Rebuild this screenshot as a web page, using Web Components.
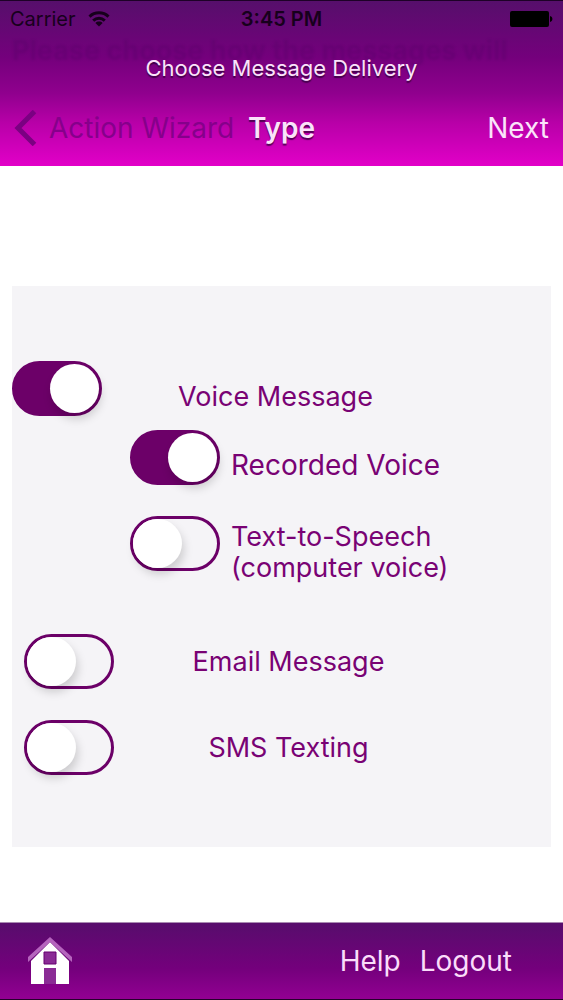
<!DOCTYPE html>
<html lang="en">
<head>
<meta charset="utf-8">
<meta name="viewport" content="width=device-width, initial-scale=1">
<title>Choose Message Delivery Type</title>
<style>
  body {
    margin: 0;
    font-family: Inter, "Liberation Sans", sans-serif;
    background: #fff;
  }
</style>
</head>
<body>
<delivery-screen>
  <span slot="under">Please choose how the messages will</span>
  <status-bar slot="top" carrier="Carrier" time="3:45 PM"></status-bar>
  <nav-header slot="top">
    <span slot="prompt">Choose Message Delivery</span>
    <span slot="back">Action Wizard</span>
    <span slot="title">Type</span>
    <span slot="action">Next</span>
  </nav-header>

  <option-panel>
    <toggle-row checked>Voice Message</toggle-row>
    <toggle-row level="sub" size="large" checked>Recorded Voice</toggle-row>
    <toggle-row level="sub" gap="wide">Text-to-Speech<br>(computer voice)</toggle-row>
    <toggle-row level="inset" gap="section">Email Message</toggle-row>
    <toggle-row level="inset" gap="wide">SMS Texting</toggle-row>
  </option-panel>

  <tool-bar slot="bottom">
    <a href="#help">Help</a>
    <a href="#logout">Logout</a>
  </tool-bar>
</delivery-screen>

<script>
class DeliveryScreen extends HTMLElement {
  constructor() {
    super();

    const shadowRoot = this.attachShadow({ mode: 'open' });
    shadowRoot.innerHTML = `
      <style>
        :host {
          display: flex;
          flex-direction: column;
          min-height: 100vh;
        }

        header {
          position: relative;
          box-sizing: border-box;
          border-top: 1px solid #1d0127;
          background: linear-gradient(#560f6b, #74007c 34%, #90008e 56%, #b800a8 74%, #e200c8);
        }

        /* page text scrolled under the translucent header */
        .under {
          position: absolute;
          top: 34px;
          left: 12px;
          right: 0;
          overflow: hidden;
          white-space: nowrap;
          font-size: 27px;
          line-height: 32px;
          font-weight: 700;
          color: rgba(80, 0, 100, .25);
          filter: blur(1px);
        }

        ::slotted(status-bar),
        ::slotted(nav-header) {
          position: relative;
        }

        main {
          flex: 1;
          padding: 120px 12px 75px;
          display: flex;
        }
      </style>
      <header>
        <div class="under"><slot name="under"></slot></div>
        <slot name="top"></slot>
      </header>
      <main><slot></slot></main>
      <slot name="bottom"></slot>
    `;
  }
}

class StatusBar extends HTMLElement {
  constructor() {
    super();

    const shadowRoot = this.attachShadow({ mode: 'open' });
    shadowRoot.innerHTML = `
      <style>
        :host {
          display: grid;
          grid-template-columns: 1fr auto 1fr;
          align-items: center;
          height: 36px;
          padding: 0 10px;
          font-size: 20px;
          color: #17001c;
        }

        .carrier {
          display: flex;
          align-items: center;
          gap: 12px;
        }

        .time {
          font-weight: 600;
        }

        .battery {
          justify-self: end;
        }

        svg {
          display: block;
        }
      </style>
      <div class="carrier">
        <span>${this.getAttribute('carrier')}</span>
        <svg width="22" height="16" viewBox="0 0 22 16" fill="none" stroke="currentColor" stroke-width="3">
          <path d="M1.5 5.6C6.8 .6 15.2 .6 20.5 5.6"/>
          <path d="M5.2 9.6C8.6 6.4 13.4 6.4 16.8 9.6"/>
          <path d="M11 15.5L7.4 11.9C9.4 10.1 12.6 10.1 14.6 11.9Z" fill="currentColor" stroke="none"/>
        </svg>
      </div>
      <div class="time">${this.getAttribute('time')}</div>
      <svg class="battery" width="43" height="16" viewBox="0 0 43 16" fill="#000">
        <rect x="0" y="0" width="39" height="16" rx="2"/>
        <path d="M40 5c1.6.4 2.4 1.6 2.4 3s-.8 2.6-2.4 3z"/>
      </svg>
    `;
  }
}

class NavHeader extends HTMLElement {
  constructor() {
    super();

    const shadowRoot = this.attachShadow({ mode: 'open' });
    shadowRoot.innerHTML = `
      <style>
        :host {
          display: block;
          color: #fbe3fa;
        }

        .prompt {
          margin: 0;
          padding-top: 18px;
          text-align: center;
          font-size: 22px;
          line-height: 26px;
          text-shadow: 0 2px 1px rgba(40, 0, 50, .7);
        }

        nav {
          display: grid;
          grid-template-columns: 1fr auto 1fr;
          align-items: center;
          height: 85px;
          box-sizing: border-box;
          padding: 8px 14px 0;
        }

        button {
          border: 0;
          padding: 0;
          background: none;
          font: inherit;
          font-size: 28px;
          line-height: 36px;
          color: inherit;
          white-space: nowrap;
        }

        .back {
          justify-self: start;
          display: flex;
          align-items: center;
          gap: 12px;
          color: #86008b;
        }

        h1 {
          margin: 0;
          font-size: 28px;
          line-height: 36px;
          font-weight: 600;
          text-shadow: 0 2px 1px rgba(40, 0, 50, .7);
        }

        .action {
          justify-self: end;
        }
      </style>
      <p class="prompt"><slot name="prompt"></slot></p>
      <nav>
        <button class="back" type="button">
          <svg width="23" height="36" viewBox="0 0 23 36" fill="none" stroke="#7b0082" stroke-width="5">
            <path d="M20.5 1.5L4 18L20.5 34.5"/>
          </svg>
          <slot name="back"></slot>
        </button>
        <h1><slot name="title"></slot></h1>
        <button class="action" type="button"><slot name="action"></slot></button>
      </nav>
    `;
  }
}

class OptionPanel extends HTMLElement {
  constructor() {
    super();

    const shadowRoot = this.attachShadow({ mode: 'open' });
    shadowRoot.innerHTML = `
      <style>
        :host {
          flex: 1;
          display: flex;
          flex-direction: column;
          box-sizing: border-box;
          padding: 75px 0 60px;
          background: #f5f4f7;
        }
      </style>
      <slot></slot>
    `;
  }
}

class ToggleRow extends HTMLElement {
  constructor() {
    super();

    const shadowRoot = this.attachShadow({ mode: 'open' });
    shadowRoot.innerHTML = `
      <style>
        :host {
          display: block;
          margin-top: 14px;
          color: #790274;
        }

        :host(:first-child) {
          margin-top: 0;
        }

        :host([gap="wide"]) {
          margin-top: 31px;
        }

        :host([gap="section"]) {
          margin-top: 63px;
        }

        label {
          display: flex;
          align-items: center;
          height: 55px;
          font-size: 27px;
          line-height: 31px;
        }

        :host([size="large"]) label {
          font-size: 28px;
        }

        .text {
          flex: 1;
          padding: 16px 102px 0 0;
          text-align: center;
        }

        :host([level="inset"]) label {
          padding-left: 12px;
        }

        :host([level="inset"]) .text {
          padding: 0 88px 0 0;
        }

        :host([level="sub"]) label {
          padding-left: 118px;
          gap: 11px;
        }

        :host([level="sub"]) .text {
          padding-right: 12px;
          text-align: left;
        }

        input {
          appearance: none;
          flex: none;
          box-sizing: border-box;
          width: 90px;
          height: 55px;
          margin: 0;
          border: 3px solid #6c0068;
          border-radius: 28px;
          display: flex;
          align-items: center;
        }

        input::before {
          content: "";
          width: 49px;
          height: 49px;
          border-radius: 50%;
          background: #fff;
          box-shadow: 2px 6px 10px rgba(0, 0, 0, .17);
        }

        input:checked {
          background: #6c0068;
          justify-content: flex-end;
        }
      </style>
      <label>
        <input type="checkbox" role="switch">
        <span class="text"><slot></slot></span>
      </label>
    `;
    this.input = shadowRoot.querySelector('input');
  }

  connectedCallback() {
    this.input.checked = this.hasAttribute('checked');
  }
}

class ToolBar extends HTMLElement {
  constructor() {
    super();

    const shadowRoot = this.attachShadow({ mode: 'open' });
    shadowRoot.innerHTML = `
      <style>
        :host {
          display: flex;
          align-items: center;
          justify-content: space-between;
          box-sizing: border-box;
          height: 78px;
          padding: 0 51px 0 27px;
          border-top: 1px solid #a98ab2;
          border-bottom: 1px solid #25002a;
          background: linear-gradient(#570d6c, #74007c 60%, #920092);
        }

        .links {
          display: flex;
          gap: 19px;
        }

        ::slotted(a) {
          color: #fadcfa;
          font-size: 28px;
          line-height: 36px;
          text-decoration: none;
        }

        svg {
          display: block;
        }
      </style>
      <a href="#home" aria-label="Home">
        <svg width="46" height="48" viewBox="0 0 46 48">
          <path d="M4 24L23 5L42 24V47H4Z" fill="#fff"/>
          <path d="M1 25V20L23 0L45 20V25L23 5Z" fill="#b565bd"/>
          <path d="M17 15H29V27H17Z" fill="#8a2b95" stroke="#660070" stroke-width="1"/>
          <path d="M17 31H29V47H17Z" fill="#8a2b95"/>
        </svg>
      </a>
      <div class="links"><slot></slot></div>
    `;
  }
}

customElements.define('delivery-screen', DeliveryScreen);
customElements.define('status-bar', StatusBar);
customElements.define('nav-header', NavHeader);
customElements.define('option-panel', OptionPanel);
customElements.define('toggle-row', ToggleRow);
customElements.define('tool-bar', ToolBar);
</script>
</body>
</html>
